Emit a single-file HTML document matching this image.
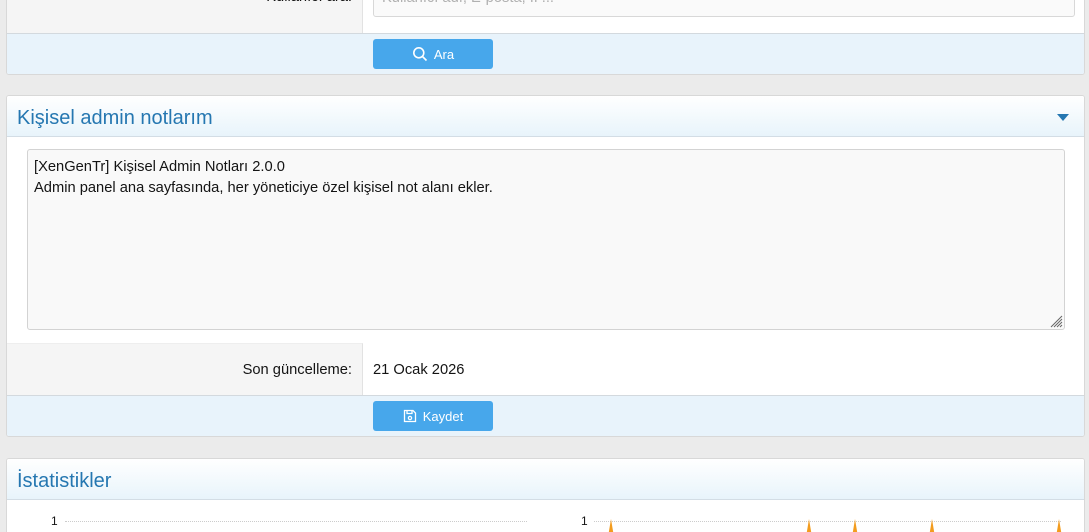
<!DOCTYPE html>
<html><head><meta charset="utf-8"><style>
*{box-sizing:border-box;margin:0;padding:0}
html,body{width:1089px;height:532px;overflow:hidden}
body{background:#ebebeb;font-family:"Liberation Sans",sans-serif;font-size:14.7px;color:#141414;position:relative}
.abs{position:absolute}
.block{position:absolute;left:6px;width:1079px;background:#fff;border:1px solid #d8d8d8;border-radius:3px;overflow:hidden}
.lab{position:absolute;left:0;width:356px;background:#f5f5f5;border-right:1px solid #e2e2e2}
.foot{position:absolute;left:0;right:0;background:#e8f3fb;border-top:1px solid #d3d9de}
.btn{position:absolute;left:366px;width:120px;height:30px;background:#47a7eb;border-radius:3px;color:#fff;font-size:13px;display:flex;align-items:center;justify-content:center;gap:6px}
.hdr{position:absolute;left:0;right:0;top:0;height:41px;background:linear-gradient(#fff,#e8f4fb);border-bottom:1px solid #d3dde5;color:#2577b1;font-size:20px;padding-left:10px;line-height:44px}
.rl{position:absolute;left:0;width:345px;text-align:right}
</style></head><body>
<div class="block" style="top:-10px;height:85px">
  <div class="lab" style="top:0;height:42px"></div>
  <div class="rl" style="top:-2px">Kullanıcı ara:</div>
  <div class="abs" style="left:366px;top:-6px;width:702px;height:32px;border:1px solid #d8d8d8;border-radius:3px;background:#fafafa;color:#b0b0b0;padding:4px 8px">Kullanıcı adı, E-posta, IP...</div>
  <div class="foot" style="top:42px;bottom:0"></div>
  <div class="btn" style="top:48px"><svg width="16" height="16" viewBox="0 0 16 16" fill="none" stroke="#fff" stroke-width="1.6"><circle cx="6.8" cy="6.8" r="5"/><path d="M10.5 10.5L14.5 14.5"/></svg>Ara</div>
</div>
<div class="block" style="top:95px;height:342px">
  <div class="hdr">Kişisel admin notlarım</div>
  <svg class="abs" style="left:1050px;top:18px" width="12" height="8" viewBox="0 0 12 8"><path d="M0 0H12L6 7Z" fill="#2577b1"/></svg>
  <div class="abs" style="left:20px;top:53px;width:1038px;height:181px;background:#f9f9f9;border:1px solid #d3d3d3;border-radius:3px;padding:7px 6px;line-height:21px">[XenGenTr] Kişisel Admin Notları 2.0.0<br>Admin panel ana sayfasında, her yöneticiye özel kişisel not alanı ekler.
    <svg class="abs" style="right:1px;bottom:1px" width="14" height="14" viewBox="0 0 14 14" stroke="#666" stroke-width="1"><path d="M13 2L2 13M13 5L5 13M13 8L8 13M13 11L11 13"/></svg>
  </div>
  <div class="lab" style="top:247px;height:52px;border-top:1px solid #eee"></div>
  <div class="rl" style="top:266px">Son güncelleme:</div>
  <div class="abs" style="left:366px;top:266px">21 Ocak 2026</div>
  <div class="foot" style="top:299px;bottom:0"></div>
  <div class="btn" style="top:305px"><svg width="14" height="14" viewBox="0 0 14 14" fill="none" stroke="#fff" stroke-width="1.3"><path d="M1.5 1.5H10L12.5 4V12.5H1.5Z"/><path d="M4 1.5V4.5H9V1.5"/><circle cx="7" cy="9" r="1.6"/></svg>Kaydet</div>
</div>
<div class="block" style="top:458px;height:90px">
  <div class="hdr">İstatistikler</div>
  <div class="abs" style="left:44px;top:55px;font-size:12px">1</div>
  <div class="abs" style="left:58px;top:62px;width:462px;border-top:1px dotted #ccc"></div>
  <div class="abs" style="left:574px;top:55px;font-size:12px">1</div>
  <div class="abs" style="left:587px;top:62px;width:467px;border-top:1px dotted #ccc"></div>
  <svg class="abs" style="left:0;top:58px" width="1078" height="20"><g fill="#f39c1e"><path d="M601 20L604 2L607 20Z"/><path d="M799 20L802 2L805 20Z"/><path d="M845 20L848 2L851 20Z"/><path d="M922 20L925 2L928 20Z"/><path d="M1049 20L1052 2L1055 20Z"/></g></svg>
</div>
</body></html>
